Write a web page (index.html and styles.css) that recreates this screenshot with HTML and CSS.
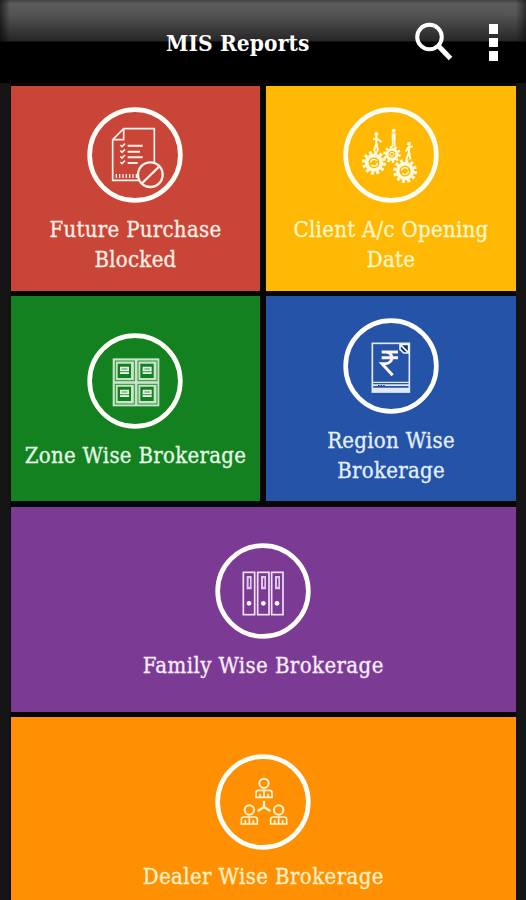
FILE: index.html
```html
<!DOCTYPE html>
<html lang="en">
<head>
    <meta charset="utf-8" />
    <title>MIS Reports</title>
    <link rel="stylesheet" href="styles.css">
</head>
<body>
    <header class="bar">
        <h1>MIS Reports</h1>
        <svg class="search" viewBox="0 0 40 40" aria-label="Search">
            <circle cx="15.5" cy="16" r="12.3" fill="none" stroke="#fff" stroke-width="4"/>
            <path d="M24 24.5L36.5 37.5" stroke="#fff" stroke-width="5"/>
        </svg>
        <div class="more"><i></i><i></i><i></i></div>
    </header>
    <main class="tiles">
        <a class="tile red">
            <svg class="icon" viewBox="0 0 330 330">
                <circle class="ring" cx="165" cy="165" r="136"/>
                <path class="line" d="M177 241H98V119L131 86H223V188M131 86V119H98"/>
                <path class="line" d="M143 137H188M143 155H180M143 172H188M143 189H173" stroke-width="6"/>
                <path class="line" d="M121 135l5 5 9-9M121 152l5 5 9-9M121 169l5 5 9-9M121 186l5 5 9-9"/>
                <path class="line" d="M107 228H174" stroke-width="12" stroke-dasharray="4 6"/>
                <circle class="line" cx="211" cy="224" r="37" stroke-width="7"/>
                <path class="line" d="M187 249L236 201" stroke-width="7"/>
            </svg>
            <span>Future Purchase Blocked</span>
        </a>
        <a class="tile yellow">
            <svg class="icon" viewBox="0 0 330 330">
                <circle class="ring" cx="165" cy="165" r="136"/>
                <g fill="none" stroke="#fffbe0">
                    <circle cx="114" cy="188" r="22" stroke-width="11"/>
                    <circle cx="114" cy="188" r="31" stroke-width="10" stroke-dasharray="9 7.23"/>
                    <circle cx="114" cy="188" r="10" stroke-width="4" stroke-dasharray="24 8"/>
                    <circle cx="207" cy="213" r="22" stroke-width="11"/>
                    <circle cx="207" cy="213" r="31" stroke-width="10" stroke-dasharray="9 7.23"/>
                    <circle cx="207" cy="213" r="10" stroke-width="4" stroke-dasharray="24 8"/>
                    <circle cx="168" cy="163" r="15" stroke-width="9"/>
                    <circle cx="168" cy="163" r="22" stroke-width="8" stroke-dasharray="7 6.82"/>
                    <circle cx="168" cy="163" r="6" stroke-width="3"/>
                </g>
                <g fill="#fffbe0">
                    <circle cx="121" cy="102" r="6"/>
                    <circle cx="173" cy="92" r="6"/>
                    <circle cx="219" cy="131" r="6"/>
                </g>
                <g fill="none" stroke="#fffbe0" stroke-width="5">
                    <path d="M121 108V130L114 153M121 128L126 153M111 116L126 118L137 126" stroke-width="6"/>
                    <path d="M173 100V118" stroke-width="12"/>
                    <path d="M170 116V140M176 116V140"/>
                    <path d="M219 138V156L211 178M219 154L223 178M230 139L215 144L210 155" stroke-width="6"/>
                </g>
            </svg>
            <span>Client A/c Opening Date</span>
        </a>
        <a class="tile green">
            <svg class="icon" viewBox="0 0 330 330">
                <circle class="ring" cx="165" cy="165" r="136"/>
                <rect x="98" y="97" width="140" height="144" fill="#c5e5c7"/>
                <g fill="none" stroke="#3d8b43" stroke-width="3">
                    <rect x="106" y="105" width="57" height="59"/>
                    <rect x="174" y="105" width="57" height="59"/>
                    <rect x="106" y="175" width="57" height="59"/>
                    <rect x="174" y="175" width="57" height="59"/>
                </g>
                <path fill="#13811f" d="M113 113h40v43h-40zM181 113h40v43h-40zM113 182h40v43h-40zM181 182h40v43h-40z"/>
                <path fill="#e4f6e5" d="M120 122h27v22h-27zM188 122h27v22h-27zM120 191h27v22h-27zM188 191h27v22h-27z"/>
                <path stroke="#438e4a" stroke-width="3" d="M125 129h17M120 137h27M193 129h17M188 137h27M125 198h17M120 206h27M193 198h17M188 206h27"/>
            </svg>
            <span>Zone Wise Brokerage</span>
        </a>
        <a class="tile blue">
            <svg class="icon" viewBox="0 0 330 330">
                <circle class="ring" cx="165" cy="165" r="136"/>
                <rect x="109" y="97" width="111" height="146" fill="none" stroke="#dfe9f7" stroke-width="5"/>
                <path fill="#dfe9f7" d="M109 212h111v4H109zM109 220h111v5H109zM109 230h111v14H109z"/>
                <path stroke="#14346e" stroke-width="4" stroke-dasharray="5 3" d="M126 224h20"/>
                <path fill="#14346e" stroke="#eef4fc" stroke-width="5" d="M192 100h26v26h-15l-11-11zM193 101l24 24"/>
                <path class="line" d="M137 123H186M137 140H186M147 123C174 122 174 158 147 158H138L170 193" stroke-width="9"/>
            </svg>
            <span>Region Wise Brokerage</span>
        </a>
        <a class="tile purple wide">
            <svg class="icon" viewBox="0 0 330 330">
                <circle class="ring" cx="165" cy="165" r="136"/>
                <g fill="none" stroke="#f3e2f8" stroke-width="5">
                    <rect x="106" y="109" width="34" height="127"/>
                    <rect x="149" y="109" width="34" height="127"/>
                    <rect x="191" y="109" width="34" height="127"/>
                </g>
                <path fill="#e2c8ea" d="M116 120h15v40h-15zM159 120h15v40h-15zM201 120h15v40h-15z"/>
                <path stroke="#7b3b94" stroke-width="4" d="M124 127v25M167 127v25M209 127v25"/>
                <g fill="#fff">
                    <circle cx="123" cy="202" r="7"/>
                    <circle cx="166" cy="202" r="7"/>
                    <circle cx="207" cy="202" r="7"/>
                </g>
            </svg>
            <span>Family Wise Brokerage</span>
        </a>
        <a class="tile orange wide">
            <svg class="icon" viewBox="0 0 330 330">
                <circle class="ring" cx="165" cy="165" r="136"/>
                <g fill="none" stroke="#fff3d0" stroke-width="6">
                    <circle cx="168" cy="109" r="14"/>
                    <path d="M144 151V137Q144 130 152 130H184Q192 130 192 137V151ZM168 130V151M156 140v11M180 140v11" stroke-width="5"/>
                    <circle cx="124" cy="189" r="14"/>
                    <path d="M100 231V217Q100 210 108 210H140Q148 210 148 217V231ZM124 210V231M112 220v11M136 220v11" stroke-width="5"/>
                    <circle cx="212" cy="189" r="14"/>
                    <path d="M188 231V217Q188 210 196 210H228Q236 210 236 217V231ZM212 210V231M200 220v11M224 220v11" stroke-width="5"/>
                    <path d="M168 161V180L149 192M168 180L187 192" stroke-width="7"/>
                </g>
            </svg>
            <span>Dealer Wise Brokerage</span>
        </a>
    </main>
</body>
</html>
```
FILE: styles.css
```css
html, body {
    margin: 0;
    padding: 0;
    height: 100%;
    overflow: hidden;
    background: #111;
    color: white;
    font-family: "DejaVu Serif Condensed", "DejaVu Serif", serif;
    font-stretch: condensed;
}
.bar {
    box-sizing: border-box;
    height: 83px;
    padding: 0 28px 0 166px;
    display: flex;
    align-items: flex-start;
    background:
        linear-gradient(to right, rgba(0,0,0,.6) 0, transparent 10px, transparent 516px, rgba(0,0,0,.5) 526px),
        linear-gradient(to bottom, #444 0, #5c5c5c 4px, #555 14px, #262626 41px, #000 42px);
}
h1 {
    flex: 1;
    margin: 0;
    padding-top: 28px;
    font-size: 22.5px;
    line-height: 30px;
    letter-spacing: 0.1px;
    white-space: nowrap;
}
.search {
    width: 40px;
    height: 40px;
    margin: 21px 35px 0 0;
}
.more {
    display: flex;
    flex-direction: column;
    gap: 4px;
    padding-top: 24px;
}
.more i {
    width: 9px;
    height: 9.5px;
    background: white;
}
.tiles {
    display: grid;
    grid-template-columns: 1fr 1fr;
    grid-auto-rows: 205px;
    gap: 5.6px;
    padding: 2.6px 10px 0 10.5px;
    background: linear-gradient(to right, #141414 10px, #060606 11px, #060606 515px, #141414 516px);
}
.tile {
    box-sizing: border-box;
    display: flex;
    flex-direction: column;
    align-items: center;
    justify-content: center;
    padding: 0 12px 1px;
    text-align: center;
    font-size: 22px;
    line-height: 30px;
    letter-spacing: 0.28px;
    -webkit-text-stroke: 0.3px;
}
.tile span {
    margin-top: 5px;
}
.wide {
    grid-column: span 2;
    letter-spacing: 0.4px;
}
.icon {
    width: 110px;
    height: 110px;
}
.ring {
    fill: none;
    stroke: #fffdf8;
    stroke-width: 14;
}
.line {
    fill: none;
    stroke: #fff3ec;
}
path.line:not([stroke-width]) {
    stroke-width: 5;
}
.red { background: #c94537; color: #ffeee4; }
.yellow { background: #ffb905; color: #fff6c8; }
.green { background: #138120; color: #e6f9e6; }
.blue { background: #2453a8; color: #e4effc; }
.purple { background: #7b3b94; color: #f8ebfb; }
.orange { background: #ff9003; color: #fff1c8; }
```
